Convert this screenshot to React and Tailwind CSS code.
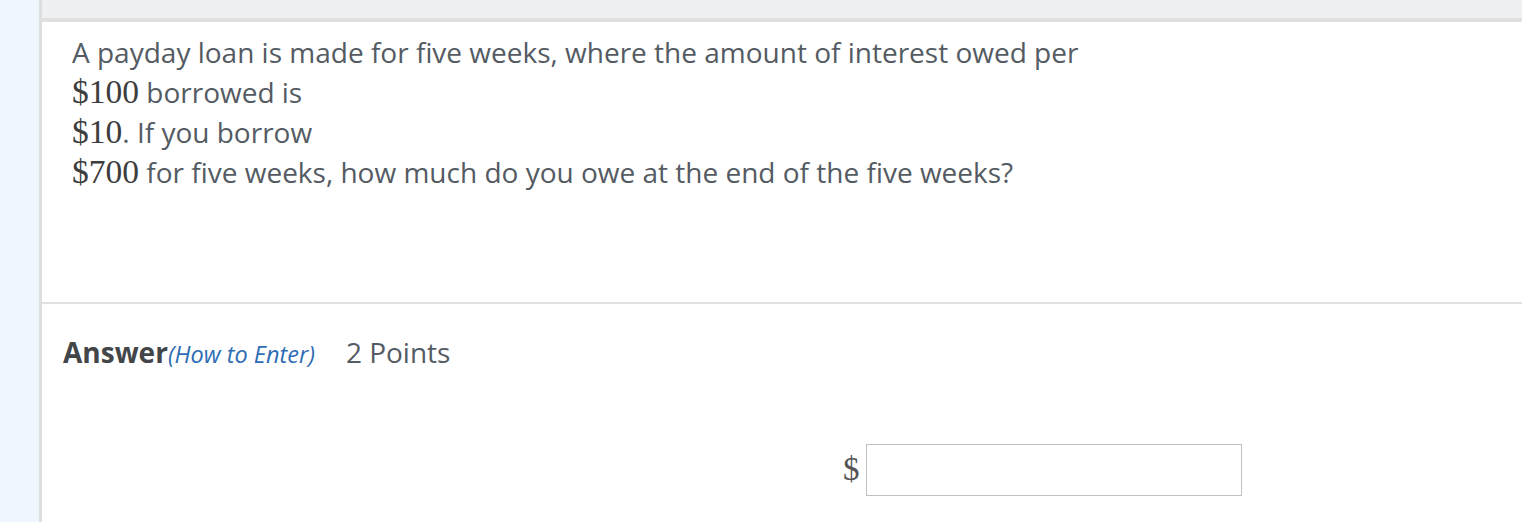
function M({ children }) {
  return (
    <span className="text-[33.5px] text-[#3d3d3d]" style={{ fontFamily: '"Liberation Serif", "Times New Roman", serif' }}>
      {children}
    </span>
  );
}

export default function App() {
  return (
    <div className="flex h-[522px] w-[1522px] overflow-hidden bg-white font-['Open_Sans',sans-serif]">
      <div className="w-[39px] shrink-0 bg-[#f0f6fe]" />
      <div className="flex flex-1 flex-col border-l-[3px] border-[#dedede]">
        <div className="h-[18px] bg-[#eff0f2]" />
        <div className="h-[4px] bg-[#e0e0e0]" />
        <div className="h-[280px] pl-[30px] pt-[10px] text-[28px] leading-[40px] text-[#545b63]">
          <div>A payday loan is made for five weeks, where the amount of interest owed per</div>
          <div>
            <M>$100</M> borrowed is
          </div>
          <div>
            <M>$10</M>. If you borrow
          </div>
          <div>
            <M>$700</M> for five weeks, how much do you owe at the end of the five weeks?
          </div>
        </div>
        <div className="h-[2px] bg-[#e0e0e0]" />
        <div className="flex items-baseline pl-[21px] pt-[30px] leading-[36px]">
          <span className="text-[28px] font-bold text-[#434649]">Answer</span>
          <span className="text-[23.5px] italic text-[#2f6db5]">(How to Enter)</span>
          <span className="ml-[31px] text-[28px] text-[#545b63]">2 Points</span>
        </div>
        <div className="mt-[72px] flex items-center pl-[801px]">
          <span
            className="mr-[6px] text-[33px] text-[#555]"
            style={{ fontFamily: '"Liberation Serif", "Times New Roman", serif' }}
          >
            $
          </span>
          <input type="text" className="h-[52px] w-[376px] border border-[#c0c0c0] bg-white outline-none" />
        </div>
      </div>
    </div>
  );
}
